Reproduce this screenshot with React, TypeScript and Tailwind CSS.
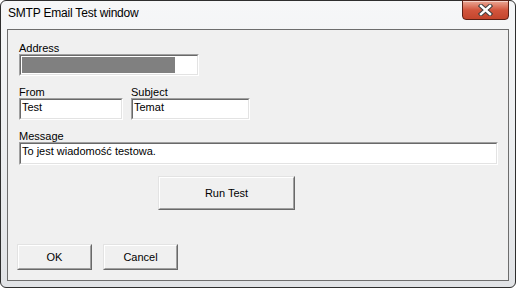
import type { ReactNode } from "react";

// sunken edit box, classic win32 look
function EditBox({ className, children }: { className: string; children?: ReactNode }) {
  return (
    <div className={`border border-t-[#a0a0a0] border-l-[#a0a0a0] border-r-white border-b-white ${className}`}>
      <div className="h-full border border-t-[#696969] border-l-[#696969] border-r-[#e3e3e3] border-b-[#e3e3e3] bg-white pl-[1px] pt-[1px] text-[11px] leading-[12px] text-black">
        {children}
      </div>
    </div>
  );
}

function PushButton({ className, label }: { className: string; label: string }) {
  return (
    <div className={`border border-t-[#e3e3e3] border-l-[#e3e3e3] border-r-[#696969] border-b-[#696969] ${className}`}>
      <div className="flex h-full items-center justify-center border border-t-white border-l-white border-r-[#a0a0a0] border-b-[#a0a0a0] bg-[#f0f0f0] text-[11px] leading-[12px] text-black">
        {label}
      </div>
    </div>
  );
}

function Label({ children }: { children: ReactNode }) {
  return <div className="h-[12px] text-[11px] leading-[12px] text-black">{children}</div>;
}

function CloseButton() {
  return (
    <div className="-mt-[1px] flex h-[20px] w-[47px] items-center justify-center rounded-b-[4px] border border-[#5c2015] bg-gradient-to-b from-[#eaa795] via-[#d2553d] to-[#c4452c] shadow-[inset_0_1px_0_rgba(255,255,255,0.5)]">
      <svg width="15" height="12" viewBox="0 0 15 12">
        <path d="M3 2 L12 10 M12 2 L3 10" stroke="#3d3d3d" strokeWidth="4.4" strokeLinecap="square" />
        <path d="M3 2 L12 10 M12 2 L3 10" stroke="#ffffff" strokeWidth="2.4" strokeLinecap="square" />
      </svg>
    </div>
  );
}

export default function App() {
  return (
    <div className="h-[288px] w-[516px] bg-white font-['Liberation_Sans',Arial,sans-serif]">
      <div className="flex h-full flex-col rounded-[6px] border border-[#2e2e2e] bg-gradient-to-b from-[#f6f7f8] via-[#eceef0] to-[#e1e3e6] px-[6px] pb-[6px]">
        {/* Title bar */}
        <div className="flex h-[28px] items-start justify-between">
          <div className="pl-[1px] pt-[5px] text-[12px] leading-[15px] tracking-[-0.2px] text-black">
            SMTP Email Test window
          </div>
          <CloseButton />
        </div>

        {/* Client area */}
        <div className="flex flex-1 flex-col border border-[#6d6d6d] bg-[#f0f0f0] pt-[12px]">
          <div className="pl-[11px]">
            <Label>Address</Label>
            <EditBox className="h-[22px] w-[180px]">
              <div className="h-[16px] w-[153px] bg-[#808080]" />
            </EditBox>
          </div>

          <div className="mt-[10px] flex gap-[8px] pl-[11px]">
            <div>
              <Label>From</Label>
              <EditBox className="h-[22px] w-[104px]">Test</EditBox>
            </div>
            <div>
              <Label>Subject</Label>
              <EditBox className="h-[22px] w-[119px]">Temat</EditBox>
            </div>
          </div>

          <div className="mt-[10px] pl-[11px]">
            <Label>Message</Label>
            <EditBox className="h-[23px] w-[479px]">To jest wiadomość testowa.</EditBox>
          </div>

          <div className="mt-[11px] pl-[150px]">
            <PushButton className="h-[34px] w-[137px]" label="Run Test" />
          </div>

          <div className="mt-[34px] flex gap-[11px] pl-[9px]">
            <PushButton className="h-[26px] w-[75px]" label="OK" />
            <PushButton className="h-[26px] w-[75px]" label="Cancel" />
          </div>
        </div>
      </div>
    </div>
  );
}
